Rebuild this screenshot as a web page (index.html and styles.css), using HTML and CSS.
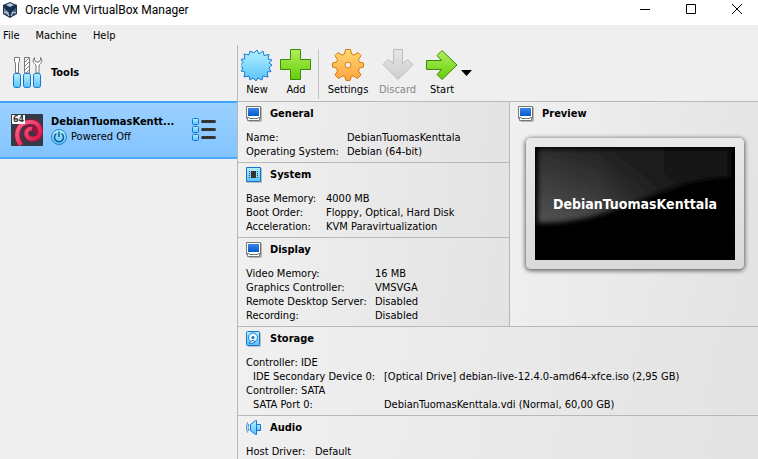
FILE: index.html
```html
<!DOCTYPE html>
<html lang="en">
<head>
<meta charset="utf-8">
<title>Oracle VM VirtualBox Manager</title>
<link rel="stylesheet" href="styles.css">
</head>
<body>
<svg class="defs" aria-hidden="true">
  <defs>
    <linearGradient id="blue" x1="0" y1="0" x2="0" y2="1"><stop offset="0" stop-color="#b5f1ff"/><stop offset="1" stop-color="#58c3fb"/></linearGradient>
    <linearGradient id="green" x1="0" y1="0" x2="0" y2="1"><stop offset="0" stop-color="#b2ee5c"/><stop offset="1" stop-color="#63cf08"/></linearGradient>
    <linearGradient id="orange" x1="0" y1="0" x2="0" y2="1"><stop offset="0" stop-color="#ffdc70"/><stop offset="1" stop-color="#ffa040"/></linearGradient>
    <linearGradient id="grey" x1="0" y1="0" x2="0" y2="1"><stop offset="0" stop-color="#e6e6e6"/><stop offset="1" stop-color="#cecece"/></linearGradient>
    <linearGradient id="red" x1="0" y1="0" x2="1" y2="1"><stop offset="0" stop-color="#ff6a8c"/><stop offset="1" stop-color="#d00a40"/></linearGradient>
    <linearGradient id="screen" x1="0" y1="0" x2="0" y2="1"><stop offset="0" stop-color="#3c87e3"/><stop offset="1" stop-color="#005ad0"/></linearGradient>
    <symbol id="monitor" viewBox="0 0 16 16">
      <path d="M2 1h14v14l-2 1H3z" fill="#b5b5b5"/>
      <path d="M.5 .5h14v12h-1v2h-12v-2h-1z" fill="#fff" stroke="#777"/>
      <path d="M2 2h11v8H2z" fill="url(#screen)"/>
      <path d="M1 11.500h2M12 11.500h2M3 12.500h9" stroke="#777"/>
    </symbol>
  </defs>
</svg>
<div class="window">
  <header class="titlebar">
    <svg class="logo" viewBox="0 0 14 16">
      <path d="M7 0l7 3v9l-7 4-7-4V3z" fill="#1c3455"/>
      <path d="M3 3l4-2 4 2-4 2z" fill="#b9c8d6"/>
      <path d="M1 5l5 3v6l-5-3z" fill="#6d88a4"/><path d="M13 5L8 8v6l5-3z" fill="#48637f"/>
      <path d="M0 3l7 3 7-3-2 4-5 4-5-4z" fill="#172e50"/><path d="M1 11l3-1 2 4M13 11l-3-1-2 4" stroke="#c5d4e2" fill="none"/>
    </svg>
    <h1 class="title">Oracle VM VirtualBox Manager</h1>
    <button class="caption" aria-label="Minimize"><svg viewBox="0 0 10 10"><path d="M0 5.500h10" stroke="#000"/></svg></button>
    <button class="caption" aria-label="Maximize"><svg viewBox="0 0 10 10"><path d="M.5 .5h9v9h-9z" fill="none" stroke="#000"/></svg></button>
    <button class="caption" aria-label="Close"><svg viewBox="0 0 10 10"><path d="M0 0l10 10M10 0L0 10" stroke="#000"/></svg></button>
  </header>
  <nav class="menubar"><button>File</button><button>Machine</button><button>Help</button></nav>
  <div class="body">
    <aside class="sidebar">
      <button class="item">
        <svg class="icon32" viewBox="0 0 32 32">
          <path d="M3.500 .5h5v4l-1 1.500v10h-3V6l-1-1.500z" fill="#fff" stroke="#777"/>
          <path d="M13.500 .5h5V16h-5z" fill="#fff" stroke="#777"/>
          <path d="M14 5l4-4M14 9l4-4M14 13l4-4M15 16l3-3" stroke="#888"/>
          <path d="M23.500 .5c-2.500 3-1 6 1.500 7.500V16h3V8c2.500-1.500 4-4.500 1.500-7.500V3l-1.500 2h-3l-1.500-2z" fill="#fff" stroke="#777"/>
          <g fill="url(#blue)" stroke="#1473cf"><rect x="2.500" y="16.500" width="7" height="14" rx="2"/><rect x="12.500" y="16.500" width="7" height="14" rx="2"/><rect x="22.500" y="16.500" width="7" height="14" rx="2"/></g>
        </svg>
        <strong>Tools</strong>
      </button>
      <button class="item selected">
        <svg class="icon32" viewBox="0 0 32 32">
          <rect width="32" height="32" rx="1" fill="#353a49"/>
          <g fill="none">
            <path d="M10 31C3 22 6 9 18 8c8-1 12 5 11 11-1 6-10 8-13 3-2-4 1-8 5-7 2 0 3 2 2 3" stroke="#9b1238" stroke-width="6"/>
            <path d="M10 31C3 22 6 9 18 8c8-1 12 5 11 11-1 6-10 8-13 3-2-4 1-8 5-7" stroke="url(#red)" stroke-width="4"/>
          </g>
          <path d="M18 20c0-4 6-4 5-1-1 2-4 3-5 1z" fill="#353a49"/>
          <rect x="1" y="1" width="13" height="9" fill="#fff"/>
          <text x="2" y="8" class="bits">64</text>
        </svg>
        <span class="vm">
          <strong>DebianTuomasKentt...</strong>
          <span class="state"><svg class="icon16" viewBox="0 0 16 16"><circle cx="8" cy="8" r="7.500" fill="url(#blue)" stroke="#2484cf"/><path d="M5.500 4.500a4.500 4.500 0 1 0 5 0M8 2.500V8" fill="none" stroke="#16578e" stroke-width="1.500"/></svg>Powered Off</span>
        </span>
        <svg class="list" viewBox="0 0 25 24">
          <g fill="url(#blue)" stroke="#1473cf"><rect x=".5" y=".5" width="6" height="6" rx="1"/><rect x=".5" y="8.500" width="6" height="6" rx="1"/><rect x=".5" y="16.500" width="6" height="6" rx="1"/></g>
          <path d="M10.500 3.500h12M10.500 11.500h12M10.500 19.500h12" stroke="#333" stroke-width="3" stroke-linecap="round"/>
        </svg>
      </button>
    </aside>
    <main class="main">
      <div class="toolbar">
        <button class="tool new"><svg class="icon32" viewBox="0 0 32 32"><path d="M16 1l2 4 4-3 1 4.500 5-1-1 4.500 4 1-3 3 3 2-3 3 2 3.500-4 .5 1 5-5-1-1 4-4-2-2 3-3-3-3 2-1-4-5 1 1-5-4-1 2-3-3-2.500 3-3-2-3 4-1-1-4.500 5 1 1-4 4 2z" fill="url(#blue)" stroke="#1d7cd0"/></svg>New</button>
        <button class="tool add"><svg class="icon32" viewBox="0 0 32 32"><path d="M10.500 .5h10v10h10v10h-10v10h-10v-10H.5v-10h10z" fill="url(#green)" stroke="#3b880c"/></svg>Add</button>
        <span class="separator"></span>
        <button class="tool settings"><svg class="icon32" viewBox="0 0 32 32"><path d="M12.500 5l1-4.500h5l1 4.500 2.500 1 4-2.500 3 3-2.500 4 1 2.500 4 1v4l-4 1-1 3 2.500 4-3.500 3.500-4-2.500-2.500 1-1 3.500h-4l-1-3.500-2.500-1-4 2.500L3 26l2.500-4-1-3-4-1v-4l4-1 1-2.500L3 6.500l3-3L10 6z" fill="url(#orange)" stroke="#d57810"/><circle cx="16" cy="16" r="3" fill="#efefef" stroke="#d57810"/></svg>Settings</button>
        <button class="tool discard" disabled><svg class="icon32" viewBox="0 0 32 32"><path d="M11.500 .5h9v14l5-4 5.500 5L16 30.500 1 15.500l5-5 5.500 4z" fill="url(#grey)" stroke="#bcbcbc"/></svg>Discard</button>
        <button class="tool start"><svg class="icon32" viewBox="0 0 32 32"><path d="M.5 11.500h15l-4.500-5 5-5L31 16 16 30.500l-5-5 4.500-5H.5z" fill="url(#green)" stroke="#3b880c"/></svg>Start</button>
        <button class="more" aria-label="Start options"><svg viewBox="0 0 11 6"><path d="M0 0h11L5.500 6z"/></svg></button>
      </div>
      <div class="overview">
        <div class="column">
          <section class="section">
            <h2><svg class="icon16"><use href="#monitor"/></svg>General</h2>
            <dl class="general"><dt>Name:</dt><dd>DebianTuomasKenttala</dd><dt>Operating System:</dt><dd>Debian (64-bit)</dd></dl>
          </section>
          <section class="section">
            <h2><svg class="icon16" viewBox="0 0 16 16"><path d="M1 1h15v15H1z" fill="#bbb"/><path d="M.5 .5h14v14H.5z" fill="url(#blue)" stroke="#1473cf"/><path d="M5 4h5v7H5z" fill="#333"/><path d="M3.500 4v8M11.500 4v8" stroke="#345" stroke-dasharray="1 1"/></svg>System</h2>
            <dl class="system"><dt>Base Memory:</dt><dd>4000 MB</dd><dt>Boot Order:</dt><dd>Floppy, Optical, Hard Disk</dd><dt>Acceleration:</dt><dd>KVM Paravirtualization</dd></dl>
          </section>
          <section class="section">
            <h2><svg class="icon16"><use href="#monitor"/></svg>Display</h2>
            <dl class="display"><dt>Video Memory:</dt><dd>16 MB</dd><dt>Graphics Controller:</dt><dd>VMSVGA</dd><dt>Remote Desktop Server:</dt><dd>Disabled</dd><dt>Recording:</dt><dd>Disabled</dd></dl>
          </section>
        </div>
        <section class="section preview">
          <h2><svg class="icon16"><use href="#monitor"/></svg>Preview</h2>
          <div class="bezel">
            <div class="display-screen">
              <svg viewBox="0 0 200 113" preserveAspectRatio="none">
                <defs><linearGradient id="gloss" gradientUnits="userSpaceOnUse" x1="60" y1="0" x2="30" y2="80"><stop offset="0" stop-color="#222"/><stop offset="1" stop-color="#505050"/></linearGradient>
                <linearGradient id="fade"><stop offset=".3" stop-color="#111" stop-opacity="0"/><stop offset="1" stop-color="#111"/></linearGradient>
                <filter id="soft"><feGaussianBlur stdDeviation="2.500"/></filter></defs>
                <g filter="url(#soft)"><path d="M3 2h194v28C120 32 90 76 3 76z" fill="url(#gloss)"/><path d="M3 2h194v28C120 32 90 76 3 76z" fill="url(#fade)"/></g>
              </svg>
              <strong>DebianTuomasKenttala</strong>
            </div>
          </div>
        </section>
      </div>
      <section class="section">
        <h2><svg class="icon16" viewBox="0 0 16 16"><path d="M2 2h13v14H2z" fill="#b8c4cc"/><rect x=".5" y=".5" width="13" height="14" rx="1" fill="url(#blue)" stroke="#1473cf"/><circle cx="7" cy="6.500" r="4.500" fill="#eafaff" stroke="#1e7ed2"/><circle cx="7" cy="6.500" r="1.500" fill="#1473cf"/><path d="M3 12l4-3 2 2-5 2z" fill="#fff" stroke="#1473cf"/></svg>Storage</h2>
        <dl class="storage"><dt class="controller">Controller: IDE</dt><dt class="port">IDE Secondary Device 0:</dt><dd>[Optical Drive] debian-live-12.4.0-amd64-xfce.iso (2,95 GB)</dd><dt class="controller">Controller: SATA</dt><dt class="port">SATA Port 0:</dt><dd>DebianTuomasKenttala.vdi (Normal, 60,00 GB)</dd></dl>
      </section>
      <section class="section last">
        <h2><svg class="icon16" viewBox="0 0 16 16"><path d="M4.500 4.500L9.500 .5h1v14h-1l-5-4z" fill="url(#blue)" stroke="#1473cf"/><path d="M10.500 4.500h4v6h-4z" fill="url(#blue)" stroke="#1473cf"/><path d="M3 4q-2 3.500 0 7M1.500 2.500q-2.500 5 0 10" fill="none" stroke="#3b8fd8"/></svg>Audio</h2>
        <dl class="audio"><dt>Host Driver:</dt><dd>Default</dd></dl>
      </section>
    </main>
  </div>
</div>
</body>
</html>
```

FILE: styles.css
```css
* { box-sizing: border-box; }
body { margin: 0; font: 11px/14px "DejaVu Sans Condensed", Tahoma, sans-serif; color: #000; background: #efefef; }
button { margin: 0; padding: 0; border: 0; background: none; font: inherit; color: inherit; }
svg { display: block; flex: none; }
.defs { position: absolute; width: 0; height: 0; }
.icon32 { width: 32px; height: 32px; }
.icon16 { width: 16px; height: 16px; }

.window { display: flex; flex-direction: column; height: 100vh; overflow: hidden; }
.titlebar { display: flex; align-items: center; height: 25px; flex: none; padding-left: 3px; background: #fff; }
.logo { width: 14px; height: 16px; margin-bottom: 6px; }
.title { flex: 1; margin: 0 0 5px 8px; font: 12px/16px Roboto, sans-serif; }
.caption { display: flex; justify-content: center; width: 46px; padding-bottom: 7px; }
.caption:last-child { margin-right: -2px; }
.caption svg { width: 10px; height: 10px; }

.menubar { display: flex; gap: 16px; height: 20px; flex: none; padding: 2px 0 0 3px; }

.body { display: flex; flex: 1; min-height: 0; }
.sidebar { width: 238px; flex: none; border-right: 1px solid #b8b8b8; }
.item { display: flex; align-items: center; gap: 8px; width: 100%; height: 56px; padding-left: 11px; text-align: left; }
.selected { height: 58px; border-top: 2px solid #3ba2ff; border-bottom: 2px solid #4ea9fa; background: linear-gradient(#9bd0ff, #82c4ff); }
.vm { flex: 1; display: flex; flex-direction: column; }
.state { display: flex; align-items: center; gap: 4px; }
.bits { font: bold 8px "DejaVu Sans", sans-serif; fill: #333; }
.list { width: 25px; height: 24px; margin-right: 20px; }

.main { flex: 1; min-width: 0; display: flex; flex-direction: column; }
.toolbar { display: flex; height: 57px; flex: none; padding-top: 4px; border-bottom: 1px solid #b8b8b8; }
.tool { display: flex; flex-direction: column; align-items: center; gap: 2px; width: 38px; height: 48px; white-space: nowrap; }
.add { width: 40px; }
.settings { width: 48px; }
.discard { width: 51px; color: #888; }
.separator { width: 1px; height: 50px; margin: 0 5px 0 2px; background: #c4c4c4; }
.more { width: 11px; height: 48px; }
.more svg { width: 11px; height: 6px; }

.overview { display: grid; grid-template-columns: minmax(0, 1fr) 249px; flex: none; }
.section { flex: none; padding: 4px 8px 3px; border-bottom: 1px solid #b8b8b8; background: linear-gradient(100deg, #f0f0f0, #e3e3e3); }
.section h2 { display: flex; align-items: center; gap: 8px; height: 16px; margin: 0 0 9px; font-size: 11px; line-height: 16px; }
.section dl { display: grid; margin: 0; white-space: nowrap; }
.section dd { margin: 0; }
.general { grid-template-columns: 101px 1fr; }
.system { grid-template-columns: 80px 1fr; }
.display { grid-template-columns: 129px 1fr; }
.storage { grid-template-columns: 138px 1fr; }
.audio { grid-template-columns: 69px 1fr; }
.controller { grid-column: 1 / -1; }
.port { padding-left: 7px; }
.last { flex: 1; border-bottom: 0; }

.preview { border-left: 1px solid #b8b8b8; }
.bezel { margin: 16px 6px 0 8px; padding: 9px; border-radius: 5px; background: linear-gradient(#e9e9e9, #d9d9d9); box-shadow: 0 1px 4px 1px #666; }
.display-screen { position: relative; display: flex; align-items: center; justify-content: center; height: 113px; background: #000; color: #fff; }
.display-screen svg { position: absolute; inset: 0; width: 100%; height: 100%; }
.display-screen strong { position: relative; font-size: 14px; }
```
